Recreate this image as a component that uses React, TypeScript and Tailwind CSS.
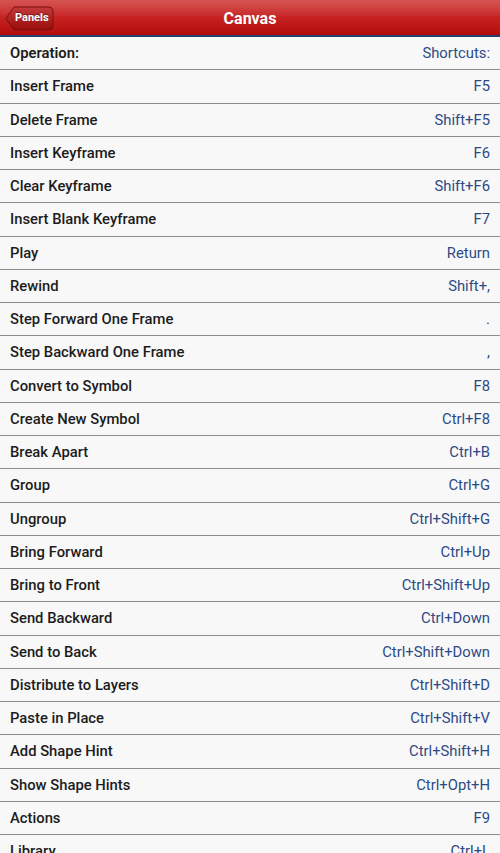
import React from "react";

const shortcuts: [string, string][] = [
  ["Insert Frame", "F5"],
  ["Delete Frame", "Shift+F5"],
  ["Insert Keyframe", "F6"],
  ["Clear Keyframe", "Shift+F6"],
  ["Insert Blank Keyframe", "F7"],
  ["Play", "Return"],
  ["Rewind", "Shift+,"],
  ["Step Forward One Frame", "."],
  ["Step Backward One Frame", ","],
  ["Convert to Symbol", "F8"],
  ["Create New Symbol", "Ctrl+F8"],
  ["Break Apart", "Ctrl+B"],
  ["Group", "Ctrl+G"],
  ["Ungroup", "Ctrl+Shift+G"],
  ["Bring Forward", "Ctrl+Up"],
  ["Bring to Front", "Ctrl+Shift+Up"],
  ["Send Backward", "Ctrl+Down"],
  ["Send to Back", "Ctrl+Shift+Down"],
  ["Distribute to Layers", "Ctrl+Shift+D"],
  ["Paste in Place", "Ctrl+Shift+V"],
  ["Add Shape Hint", "Ctrl+Shift+H"],
  ["Show Shape Hints", "Ctrl+Opt+H"],
  ["Actions", "F9"],
  ["Library", "Ctrl+L"],
];

function BackButton() {
  return (
    <div className="relative h-[25px] w-[49px]">
      <svg width="49" height="25" viewBox="0 0 49 25" className="absolute inset-0">
        <defs>
          <linearGradient id="bb" x1="0" y1="0" x2="0" y2="1">
            <stop offset="0" stopColor="#c23a3a" />
            <stop offset="1" stopColor="#9a0c0c" />
          </linearGradient>
        </defs>
        <path
          d="M0.8 12.5 L9 1 H44 Q48 1 48 5 V20 Q48 24 44 24 H9 Z"
          fill="url(#bb)"
          stroke="#7a1010"
          strokeWidth="1"
        />
      </svg>
      <span className="absolute inset-0 flex items-center pl-[10px] text-[11px] font-bold text-white [text-shadow:0_-1px_0_rgba(0,0,0,0.4)]">
        Panels
      </span>
    </div>
  );
}

function Row({ label, keys, head }: { label: string; keys: string; head?: boolean }) {
  return (
    <div className="flex h-[33.26px] shrink-0 items-center justify-between border-b border-[#8c8c8c] pl-[10px] pr-[10px]">
      <span className={`text-[14.8px] text-[#1c1c1c] ${head ? "font-semibold" : "font-medium"}`}>{label}</span>
      <span className="text-[14.8px] text-[#2d4a86]">{keys}</span>
    </div>
  );
}

export default function App() {
  return (
    <div className="flex h-[853px] w-[500px] flex-col overflow-hidden bg-[#f8f8f8] font-['Roboto',sans-serif]">
      <div className="relative flex h-[35px] shrink-0 items-center justify-center bg-gradient-to-b from-[#d65454] via-[#c62222] to-[#b30909]">
        <div className="absolute left-[5px] top-[6px]">
          <BackButton />
        </div>
        <span className="pt-[3px] text-[16px] font-bold text-white">Canvas</span>
      </div>
      <div className="h-[2px] shrink-0 bg-[#21406e]" />
      <Row label="Operation:" keys="Shortcuts:" head />
      {shortcuts.map(([l, k]) => (
        <Row key={l} label={l} keys={k} />
      ))}
    </div>
  );
}
